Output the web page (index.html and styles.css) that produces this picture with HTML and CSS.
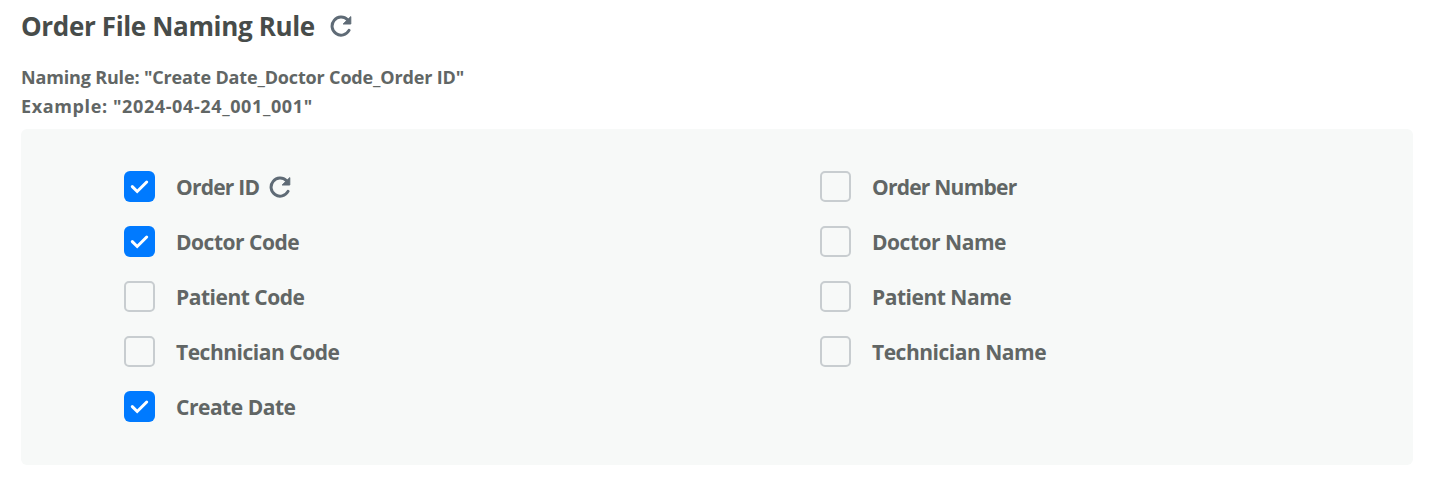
FILE: index.html
```html
<!DOCTYPE html>
<html lang="en">
<head>
  <meta charset="UTF-8">
  <meta name="viewport" content="width=device-width, initial-scale=1.0">
  <title>Order File Naming Rule</title>
  <link rel="stylesheet" href="styles.css">
</head>
<body>
  <svg class="hidden">
    <symbol id="icon-refresh" viewBox="0 0 22 22">
      <path d="M19 15.4A9 9 0 1 1 17.5 4.8" fill="none" stroke="currentColor" stroke-width="3" stroke-linecap="round"/>
      <path d="M20.8 1.6V9H13.2Z" fill="currentColor" stroke="currentColor" stroke-width="1" stroke-linejoin="round"/>
    </symbol>
  </svg>

  <header>
    <h1>Order File Naming Rule</h1>
    <svg class="refresh"><use href="#icon-refresh"/></svg>
  </header>

  <section class="summary">
    <p>Naming Rule: "Create Date_Doctor Code_Order ID"</p>
    <p class="example">Example: "2024-04-24_001_001"</p>
  </section>

  <form class="options">
    <div class="option order">
      <label><input type="checkbox" checked><span>Order ID</span></label>
      <svg class="refresh"><use href="#icon-refresh"/></svg>
    </div>
    <div class="option order"><label><input type="checkbox"><span>Order Number</span></label></div>
    <div class="option"><label><input type="checkbox" checked><span>Doctor Code</span></label></div>
    <div class="option"><label><input type="checkbox"><span>Doctor Name</span></label></div>
    <div class="option"><label><input type="checkbox"><span>Patient Code</span></label></div>
    <div class="option"><label><input type="checkbox"><span>Patient Name</span></label></div>
    <div class="option"><label><input type="checkbox"><span>Technician Code</span></label></div>
    <div class="option"><label><input type="checkbox"><span>Technician Name</span></label></div>
    <div class="option"><label><input type="checkbox" checked><span>Create Date</span></label></div>
  </form>
</body>
</html>
```

FILE: styles.css
```css
* {
  box-sizing: border-box;
}
body {
  margin: 0;
  padding: 6px 19px 0 21px;
  background-color: #fff;
  color: #616665;
  font-family: "Open Sans", "Noto Sans", sans-serif;
  font-weight: 700;
}
.hidden {
  display: none;
}
header {
  display: flex;
  align-items: center;
  gap: 15px;
  height: 40px;
}
h1 {
  margin: 0;
  color: #474c4a;
  font-size: 26px;
  font-weight: 700;
  letter-spacing: -0.35px;
  line-height: 40px;
  white-space: nowrap;
}
.refresh {
  width: 22px;
  height: 22px;
  color: #5f6b76;
}
.summary {
  padding-top: 17px;
  font-size: 18px;
  letter-spacing: -0.16px;
}
.summary p {
  margin: 0;
  line-height: 29px;
}
.summary .example {
  letter-spacing: 0.62px;
}
.options {
  display: grid;
  grid-template-columns: 1fr 1fr;
  grid-auto-rows: 31px;
  row-gap: 24px;
  height: 336px;
  margin-top: 8px;
  padding: 42px 0 0 103px;
  column-gap: 103px;
  background-color: #f7f9f8;
  border-radius: 6px;
}
.option {
  display: flex;
  align-items: center;
  gap: 10px;
  letter-spacing: -0.48px;
}
.order {
  letter-spacing: -0.77px;
}
label {
  display: flex;
  align-items: center;
  gap: 21px;
  font-size: 21px;
  line-height: 31px;
  cursor: pointer;
}
label span {
  padding-top: 1px;
  line-height: 32px;
}
input[type="checkbox"] {
  appearance: none;
  width: 31px;
  height: 31px;
  margin: 0;
  border: 2px solid #c8cdd0;
  border-radius: 5px;
  cursor: pointer;
}
input[type="checkbox"]:checked {
  border: none;
  border-radius: 6px;
  background: #007aff url("data:image/svg+xml,%3Csvg xmlns='http://www.w3.org/2000/svg' viewBox='0 0 31 31'%3E%3Cpath d='M8.3 15.6l4.9 4.9L22.7 11' fill='none' stroke='white' stroke-width='3' stroke-linecap='round'/%3E%3C/svg%3E");
}
```
